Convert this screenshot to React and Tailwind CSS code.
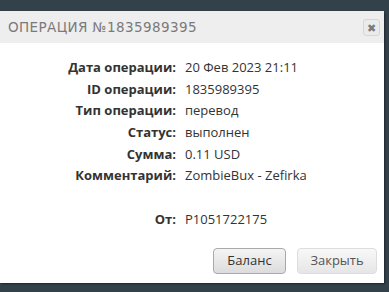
import React from 'react';

const rows = [
  ['Дата операции:', '20 Фев 2023 21:11'],
  ['ID операции:', '1835989395'],
  ['Тип операции:', 'перевод'],
  ['Статус:', 'выполнен'],
  ['Сумма:', '0.11 USD'],
  ['Комментарий:', 'ZombieBux - Zefirka'],
  ['', ''],
  ['От:', 'P1051722175'],
];

export default function App() {
  return (
    <div className="h-[292px] w-[389px] overflow-hidden bg-[#33414a] pt-[11px]" style={{ fontFamily: '"Open Sans", sans-serif' }}>
      <div className="flex h-[272px] w-[384px] flex-col rounded-tr-[3px] bg-white shadow-[1px_1px_2px_rgba(0,0,0,0.4)]">
        <div className="flex h-[32px] items-center justify-between bg-[#eeeeee] pl-[8px] pr-[4px]">
          <span className="text-[13.5px] tracking-[0.4px] text-[#7a7a7a] uppercase" style={{ fontFamily: '"DejaVu Sans", sans-serif' }}>
            Операция №1835989395
          </span>
          <button className="flex h-[17px] w-[17px] items-center justify-center rounded-[3px] border border-[#d6d6d6] bg-[#ebebeb] text-[11px] leading-none text-[#7a7a7a]">
            ✖
          </button>
        </div>
        <div className="grid grid-cols-[176px_1fr] gap-x-[9px] pt-[14px] text-[13px] text-[#333]">
          {rows.map(([label, value], i) => (
            <React.Fragment key={i}>
              <div className="h-[21.7px] text-right leading-[21.7px] font-bold">{label}</div>
              <div className="h-[21.7px] leading-[21.7px]">{value}</div>
            </React.Fragment>
          ))}
        </div>
        <div className="mt-auto flex justify-end gap-[11px] pr-[7px] pb-[9px]">
          <button className="h-[26px] w-[73px] rounded-[4px] border border-[#a9a9a9] bg-gradient-to-b from-[#f4f4f4] to-[#dcdcdc] text-[13px] text-[#333]">
            Баланс
          </button>
          <button className="h-[26px] w-[80px] rounded-[4px] border border-[#dddddd] bg-gradient-to-b from-[#f8f8f8] to-[#e6e6e6] text-[13px] text-[#555]">
            Закрыть
          </button>
        </div>
      </div>
    </div>
  );
}
